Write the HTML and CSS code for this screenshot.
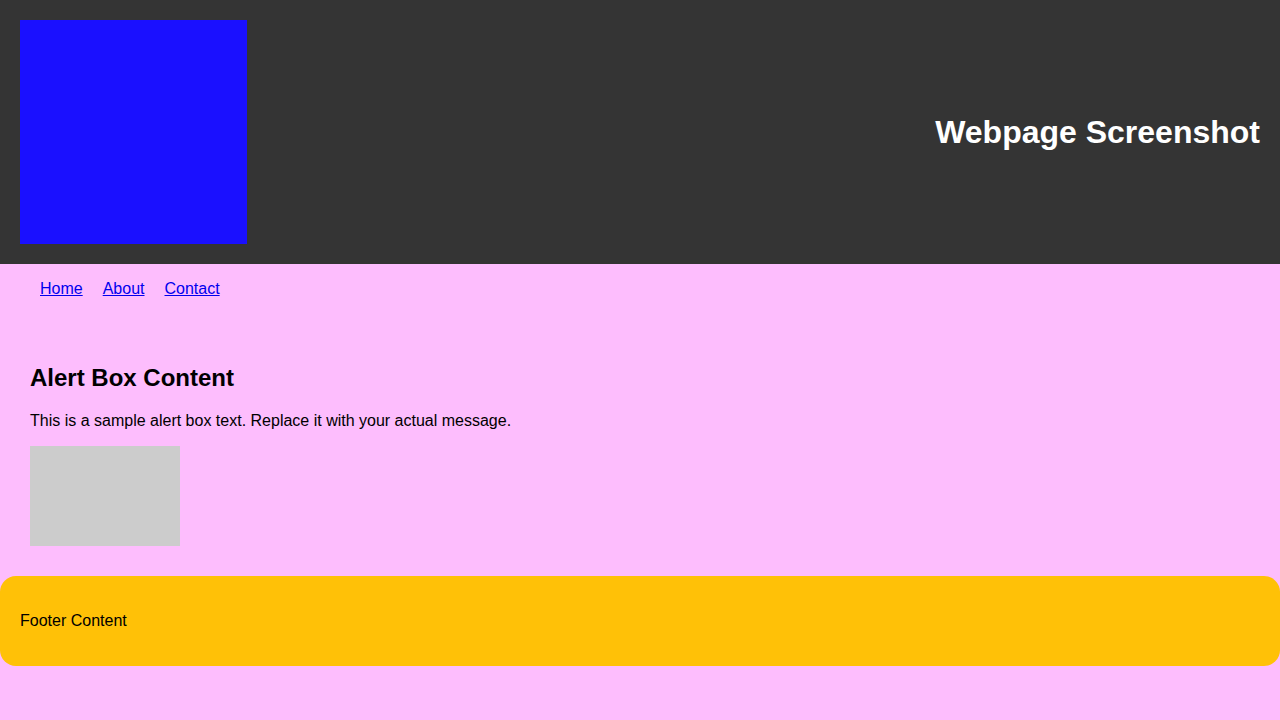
FILE: index.html
```html
<!DOCTYPE html>
<html lang="en">
<head>
<meta charset="utf-8">
<title>Webpage Screenshot</title>
<link rel="stylesheet" href="styles.css">
</head>
<body>
<header class="site-header">
  <div class="logo"></div>
  <h1 class="title">Webpage Screenshot</h1>
</header>
<nav class="nav">
  <ul class="nav-list">
    <li><a href="#">Home</a></li>
    <li><a href="#">About</a></li>
    <li><a href="#">Contact</a></li>
  </ul>
</nav>
<section class="alert">
  <h2 class="alert-title">Alert Box Content</h2>
  <p class="alert-text">This is a sample alert box text. Replace it with your actual message.</p>
  <div class="alert-image"></div>
</section>
<footer class="site-footer">
  <p>Footer Content</p>
</footer>
</body>
</html>
```
FILE: styles.css
```css
html, body {
  margin: 0;
  padding: 0;
}
body {
  background: #fdbdfd;
  font-family: "Liberation Sans", Arial, sans-serif;
  font-size: 16px;
  color: #000;
}
.site-header {
  background: #343434;
  padding: 20px;
  display: flex;
  justify-content: space-between;
  align-items: center;
}
.logo {
  width: 227px;
  height: 224px;
  background: #1a10ff;
}
.title {
  color: #fff;
  font-size: 32px;
  margin: 0;
}
.nav-list {
  list-style: none;
  margin: 16px 0;
  padding-left: 40px;
  display: flex;
  gap: 20px;
}
.nav-list a {
  color: #0000ee;
}
.alert {
  padding: 30px;
}
.alert-title {
  font-size: 24px;
  margin: 20px 0;
}
.alert-text {
  margin: 16px 0;
}
.alert-image {
  width: 150px;
  height: 100px;
  background: #cccccc;
}
.site-footer {
  background: #ffc107;
  border-radius: 16px;
  padding: 20px;
}
.site-footer p {
  margin: 16px 0;
}
```
